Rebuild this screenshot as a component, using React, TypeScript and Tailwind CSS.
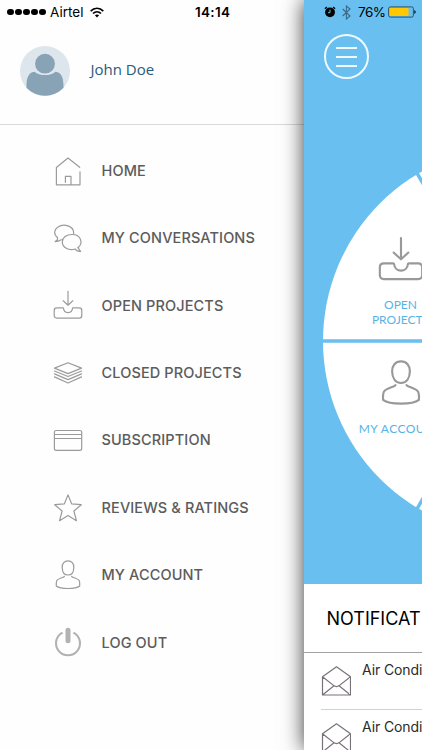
import type { ReactNode } from "react";

// ─── Icons ────────────────────────────────────────────────────────────────────

function Glyph({
  children,
  className = "size-[30px]",
  weight = 1.2,
}: {
  children: ReactNode;
  className?: string;
  weight?: number;
}) {
  return (
    <svg
      viewBox="0 0 30 30"
      className={`shrink-0 ${className}`}
      fill="none"
      stroke="currentColor"
      strokeWidth={weight}
      strokeLinecap="round"
      strokeLinejoin="round"
    >
      {children}
    </svg>
  );
}

const InboxPaths = () => (
  <>
    <path d="M15 1.3V15M10.2 10.8L15 15.2L19.8 10.8" />
    <path d="M10.5 18.3C10.8 24 19.2 24 19.5 18.3C19.5 18 19.8 17.9 20.2 17.9H26.2Q28.8 17.9 28.8 20.5V25.5Q28.8 28.1 26.2 28.1H3.8Q1.2 28.1 1.2 25.5V20.5Q1.2 17.9 3.8 17.9H9.8C10.2 17.9 10.5 18 10.5 18.3Z" />
  </>
);

const PersonPaths = () => (
  <>
    <path d="M15 .9C18.6 .9 20.9 3.6 20.8 7.4C20.7 11.7 18.7 15 15 15C11.3 15 9.3 11.7 9.2 7.4C9.1 3.6 11.4 .9 15 .9Z" />
    <path d="M11.4 16.3C11.2 17.6 4.2 18.4 3.6 21.2C3.2 22.7 3.2 24.3 3.3 26C7.5 29.3 22.5 29.3 26.7 26C26.8 24.3 26.8 22.7 26.4 21.2C25.8 18.4 18.8 17.6 18.6 16.3" />
  </>
);

const MENU: { label: string; icon: ReactNode }[] = [
  {
    label: "HOME",
    icon: <path d="M26.7 11.3L15 2L3.4 11.5V28.8H27V15.8M12.4 26.3V20.3H18V28.6" />,
  },
  {
    label: "MY CONVERSATIONS",
    icon: (
      <>
        <path d="M4.6 14.8C.4 11.5 1 6.5 4.6 4.2C11 -.2 20.6 3.2 20.6 9.5V10.5M4.6 14.8L4.3 17L2.2 18.6C4.5 18.6 6.4 17.9 8.2 16.7" />
        <path d="M24.8 24.8C30.5 20.4 28.2 11.5 19.2 11.5C13.4 11.5 9.3 14.6 9.3 19C9.3 24.5 15.5 27.8 22 26C23.7 27.8 25.5 28.7 27.6 28.3C26.3 27.4 25.5 26.3 25.5 24.3" />
      </>
    ),
  },
  { label: "OPEN PROJECTS", icon: <InboxPaths /> },
  {
    label: "CLOSED PROJECTS",
    icon: (
      <path d="M15 4.8L28.5 10.1L15 15.6L1.5 10.1ZM1.5 13L15 18.5L28.5 13M1.5 15.9L15 21.6L28.5 15.9M1.5 18.9L15 25L28.5 18.9" />
    ),
  },
  {
    label: "SUBSCRIPTION",
    icon: (
      <>
        <rect x="1.4" y="5.5" width="27.3" height="19.8" rx="1.9" />
        <path d="M1.5 9.5H28.5M1.5 13.5H28.5" />
      </>
    ),
  },
  {
    label: "REVIEWS & RATINGS",
    icon: (
      <path d="M15 1.9L18.6 10.8L28.3 11.7L20.9 18L23.4 27.7L15 22.5L6.6 27.7L9.1 18L1.7 11.7L11.4 10.8Z" />
    ),
  },
  { label: "MY ACCOUNT", icon: <PersonPaths /> },
  {
    label: "LOG OUT",
    icon: (
      <>
        <path d="M9.6 5.6A12 12 0 1 0 20.4 5.6" strokeWidth="2.1" strokeLinecap="butt" />
        <path d="M15 3.3V13.7" strokeWidth="5" />
      </>
    ),
  },
];

function Wifi() {
  return (
    <svg viewBox="0 0 14 11" className="ml-[6px] h-[11px] w-[14px]" fill="none" stroke="#000" strokeWidth="1.7">
      <path d="M.7 4.1C4.3.3 9.7.3 13.3 4.1M3 6.5C5.3 4.2 8.7 4.2 11 6.5" />
      <path d="M7 10.4L4.9 8.3C6.1 7.2 7.9 7.2 9.1 8.3Z" fill="#000" stroke="none" />
    </svg>
  );
}

function Avatar() {
  return (
    <svg viewBox="0 0 50 50" className="size-[50px] shrink-0">
      <circle cx="25" cy="25" r="25" fill="#dde5ed" />
      <path
        d="M6.5 41.8C6.3 33 8 26 14.6 25.7C19 30.2 31 30.2 35.4 25.7C42 26 43.7 33 43.5 41.8C33.5 52.3 16.5 52.3 6.5 41.8Z"
        fill="#88a3b5"
      />
      <circle cx="25" cy="17.7" r="9.9" fill="#88a3b5" />
    </svg>
  );
}

function Envelope() {
  return (
    <svg
      viewBox="0 0 30 30"
      className="size-[30px] shrink-0"
      fill="none"
      stroke="#77727a"
      strokeWidth="1.2"
      strokeLinejoin="round"
    >
      <path d="M1.5 10.8L15.5 .8L29.5 10.8V29H1.5ZM1.5 10.8L12.8 19.6Q15.5 21.6 18.2 19.6L29.5 10.8M1.5 29L13 19.8M29.5 29L18 19.8" />
    </svg>
  );
}

// ─── Drawer ───────────────────────────────────────────────────────────────────

function Drawer() {
  return (
    <aside className="flex w-[304px] shrink-0 flex-col bg-[#fefefe]">
      <div className="flex h-6 items-center pl-[7px] text-black">
        <div className="flex gap-[1.4px]">
          {[0, 1, 2, 3, 4].map((i) => (
            <span key={i} className="size-[6.6px] rounded-full bg-black" />
          ))}
        </div>
        <span className="ml-[4.5px] w-[34px] text-[13.5px] whitespace-nowrap">Airtel</span>
        <Wifi />
        <span className="ml-[91px] text-[13.5px] font-semibold tracking-[0.3px]">14:14</span>
      </div>

      <div className="flex h-[101px] items-start border-b border-[#d9d9d9] pt-[22px] pl-[19.5px]">
        <Avatar />
        <span className="mt-[11px] ml-[21px] font-['Open_Sans','Noto_Sans',sans-serif] text-[15px] leading-6 text-[#2b5a78]">
          John Doe
        </span>
      </div>

      <nav className="flex flex-col pt-3">
        {MENU.map((item) => (
          <a key={item.label} className="flex h-[67.4px] items-center pl-[53px]">
            <Glyph className={item.label === "LOG OUT" ? "size-[30px] text-[#b2b2b2]" : "size-[30px] text-[#9b9b9b]"}>
              {item.icon}
            </Glyph>
            <span className="ml-[18.5px] text-[14.5px] font-[550] tracking-[0.12px] whitespace-nowrap text-[#5c5c5c]">
              {item.label}
            </span>
          </a>
        ))}
      </nav>
    </aside>
  );
}

// ─── Dashboard ────────────────────────────────────────────────────────────────

function StatusIcons() {
  return (
    <div className="flex h-6 items-center pl-5 text-black">
      <svg viewBox="0 0 12 12" className="size-3 shrink-0">
        <circle cx="6" cy="6.3" r="4.9" />
        <path d="M.9 2.8L2.9 1.1M11.1 2.8L9.1 1.1" stroke="#000" strokeWidth="1.3" />
        <path d="M6 3.6V6.7H4" stroke="#69bff0" strokeWidth="1" fill="none" />
      </svg>
      <svg
        viewBox="0 0 9 15"
        className="ml-1.5 h-[15px] w-[9px] shrink-0"
        fill="none"
        stroke="#3a6b88"
        strokeWidth="1.1"
      >
        <path d="M.7 4L8 11L4.4 14V1L8 4L.7 11" />
      </svg>
      <span className="ml-[7px] w-[27px] text-[13.5px] tracking-[-0.5px] whitespace-nowrap">76%</span>
      <svg viewBox="0 0 28 12" className="ml-[3px] h-3 w-7 shrink-0">
        <rect x=".6" y=".9" width="24.8" height="10.2" rx="1.8" fill="none" stroke="#28475a" strokeWidth=".9" />
        <rect x="1.6" y="1.9" width="19" height="8.2" rx=".8" fill="#ffc800" />
        <path d="M26.4 4.1Q29 6 26.4 7.9Z" />
      </svg>
    </div>
  );
}

function Wheel() {
  return (
    <svg viewBox="0 0 118 584" className="absolute inset-0 h-[584px] w-[118px]">
      <circle cx="213.7" cy="341" r="194.7" fill="#fff" />
      <path d="M0 341H214M210 341L96.5 144.5M210 341L96.5 537.5" stroke="#69bff0" strokeWidth="3.5" />
    </svg>
  );
}

function Dashboard() {
  return (
    <main className="relative flex w-[118px] shrink-0 flex-col bg-white shadow-[0_0_20px_0_rgba(0,0,0,0.78)]">
      <section className="relative h-[584px] shrink-0 overflow-hidden bg-[#69bff0]">
        <Wheel />
        <div className="relative flex flex-col">
          <StatusIcons />
          <button className="mt-2.5 ml-5 flex size-[45px] flex-col items-center justify-center gap-[7px] rounded-full border-2 border-white/90">
            <span className="h-[2px] w-[21px] bg-white/90" />
            <span className="h-[2px] w-[21px] bg-white/90" />
            <span className="h-[2px] w-[21px] bg-white/90" />
          </button>

          <div className="mt-[157px] ml-[46.5px] flex h-[107px] w-[100px] flex-col items-center text-[#999999]">
            <Glyph className="size-[46px]" weight={1.4}>
              <InboxPaths />
            </Glyph>
            <p className="mt-[15px] text-center font-['Lato',sans-serif] text-[12px] leading-[15px] text-[#57b3e6]">
              OPEN
              <br />
              PROJECTS
            </p>
          </div>

          <div className="mt-[17px] ml-[46.5px] flex w-[100px] flex-col items-center text-[#999999]">
            <Glyph className="size-[46px]" weight={1.4}>
              <PersonPaths />
            </Glyph>
            <p className="mt-[15px] font-['Lato',sans-serif] text-[12px] leading-[15px] tracking-[0.45px] whitespace-nowrap text-[#57b3e6]">
              MY ACCOUNT
            </p>
          </div>
        </div>
      </section>

      <h2 className="flex h-[69px] shrink-0 items-center overflow-hidden border-b-[1.5px] border-[#a2a2a2] pl-[22.5px] text-[18px] whitespace-nowrap text-black">
        <span>NOTIFICAT</span>
      </h2>

      <ul className="overflow-hidden">
        {[0, 1].map((i) => (
          <li key={i} className="ml-[17px] flex h-[56.5px] items-start border-b border-[#d2d2d2]">
            <div className="pt-[13px]">
              <Envelope />
            </div>
            <span className="ml-[11px] pt-[7px] text-[14px] leading-5 tracking-[-0.1px] whitespace-nowrap text-[#2b2b2b]">
              Air Condi
            </span>
          </li>
        ))}
      </ul>
    </main>
  );
}

export default function App() {
  return (
    <div className="flex h-[750px] w-[422px] overflow-hidden bg-white font-['Inter','Liberation_Sans',sans-serif]">
      <Drawer />
      <Dashboard />
    </div>
  );
}
